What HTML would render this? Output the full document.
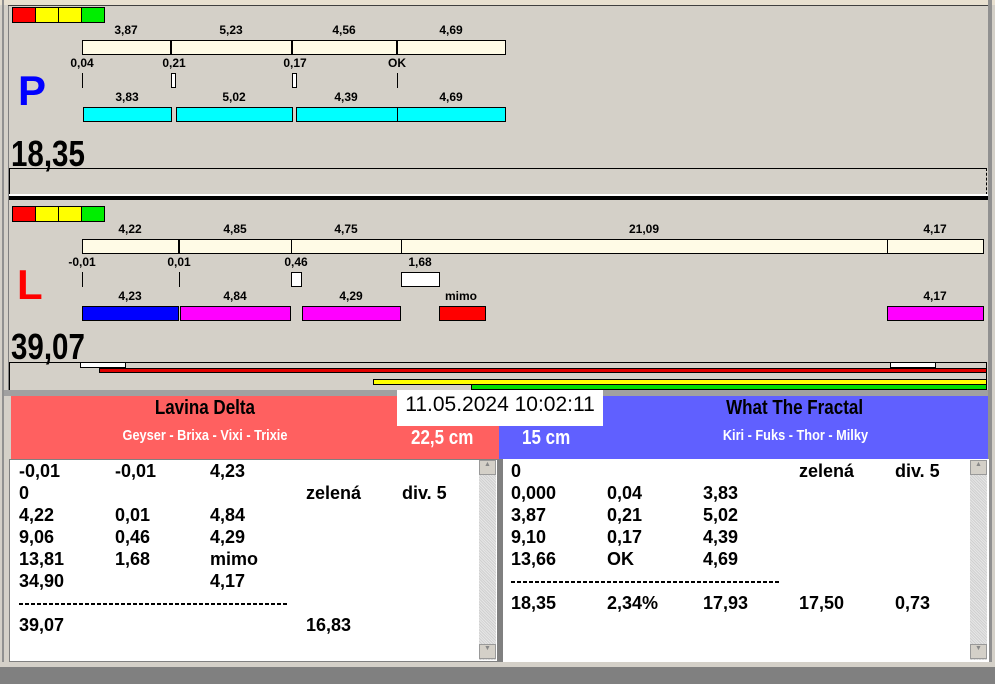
<!DOCTYPE html>
<html><head><meta charset="utf-8"><style>
*{margin:0;padding:0;box-sizing:border-box}
body{width:995px;height:684px;background:#d4d0c8;position:relative;overflow:hidden;font-family:"Liberation Sans",Arial,sans-serif;font-weight:bold;color:#000}
.a{position:absolute}
.t{position:absolute;font-size:12px;transform:translateX(-50%);white-space:nowrap;line-height:14px}
.b{position:absolute;border:1px solid #000}
.ln{position:absolute;font-size:18px;line-height:22px;white-space:nowrap}
.big{position:absolute;font-size:36px;line-height:36px;transform:scaleX(0.82);transform-origin:left top}
.dash{position:absolute;height:2px;background:repeating-linear-gradient(90deg,#000 0 4px,transparent 4px 6px)}
.nar{display:inline-block;transform:scaleX(0.85)}
</style></head><body>
<div class="a" style="left:0;top:0;width:995px;height:5px;background:#e8e0d0"></div>
<div class="a" style="left:2px;top:0;width:2px;height:668px;background:#909090"></div>
<div class="a" style="left:8px;top:5px;width:1px;height:385px;background:#808080"></div>
<div class="a" style="left:8px;top:5px;width:980px;height:1px;background:#404040"></div>
<div class="a" style="left:988px;top:0;width:4px;height:668px;background:#909090"></div>

<div class="b" style="left:12px;top:7px;width:24px;height:16px;background:#f00"></div>
<div class="b" style="left:35px;top:7px;width:24px;height:16px;background:#ff0"></div>
<div class="b" style="left:58px;top:7px;width:24px;height:16px;background:#ff0"></div>
<div class="b" style="left:81px;top:7px;width:24px;height:16px;background:#0e0"></div>
<div class="t" style="left:126px;top:23px">3,87</div>
<div class="t" style="left:231px;top:23px">5,23</div>
<div class="t" style="left:344px;top:23px">4,56</div>
<div class="t" style="left:451px;top:23px">4,69</div>
<div class="b" style="left:82px;top:40px;width:424px;height:15px;background:#fffbe6"></div>
<div class="a" style="left:170px;top:40px;width:2px;height:15px;background:#000"></div>
<div class="a" style="left:291px;top:40px;width:2px;height:15px;background:#000"></div>
<div class="a" style="left:396px;top:40px;width:2px;height:15px;background:#000"></div>
<div class="t" style="left:82px;top:56px">0,04</div>
<div class="t" style="left:174px;top:56px">0,21</div>
<div class="t" style="left:295px;top:56px">0,17</div>
<div class="t" style="left:397px;top:56px">OK</div>
<div class="a" style="left:82px;top:73px;width:1px;height:15px;background:#000"></div>
<div class="b" style="left:171px;top:73px;width:5px;height:15px;background:#fff"></div>
<div class="b" style="left:292px;top:73px;width:5px;height:15px;background:#fff"></div>
<div class="a" style="left:397px;top:73px;width:1px;height:15px;background:#000"></div>
<div class="a" style="left:18px;top:68px;font-size:42px;color:#0000ff;line-height:46px">P</div>
<div class="t" style="left:127px;top:90px">3,83</div>
<div class="t" style="left:234px;top:90px">5,02</div>
<div class="t" style="left:346px;top:90px">4,39</div>
<div class="t" style="left:451px;top:90px">4,69</div>
<div class="b" style="left:83px;top:107px;width:89px;height:15px;background:#0ff"></div>
<div class="b" style="left:176px;top:107px;width:117px;height:15px;background:#0ff"></div>
<div class="b" style="left:296px;top:107px;width:102px;height:15px;background:#0ff"></div>
<div class="b" style="left:397px;top:107px;width:109px;height:15px;background:#0ff"></div>
<div class="big" style="left:11px;top:136px">18,35</div>
<div class="b" style="left:9px;top:168px;width:978px;height:27px;border-bottom:none;border-right:1px dashed #000"></div>
<div class="a" style="left:9px;top:194px;width:979px;height:2px;background:#fff"></div>
<div class="a" style="left:9px;top:196px;width:979px;height:4px;background:#000"></div>

<div class="b" style="left:12px;top:206px;width:24px;height:16px;background:#f00"></div>
<div class="b" style="left:35px;top:206px;width:24px;height:16px;background:#ff0"></div>
<div class="b" style="left:58px;top:206px;width:24px;height:16px;background:#ff0"></div>
<div class="b" style="left:81px;top:206px;width:24px;height:16px;background:#0e0"></div>
<div class="t" style="left:130px;top:222px">4,22</div>
<div class="t" style="left:235px;top:222px">4,85</div>
<div class="t" style="left:346px;top:222px">4,75</div>
<div class="t" style="left:644px;top:222px">21,09</div>
<div class="t" style="left:935px;top:222px">4,17</div>
<div class="b" style="left:82px;top:239px;width:902px;height:15px;background:#fffbe6"></div>
<div class="a" style="left:178px;top:239px;width:2px;height:15px;background:#000"></div>
<div class="a" style="left:291px;top:239px;width:1px;height:15px;background:#000"></div>
<div class="a" style="left:401px;top:239px;width:1px;height:15px;background:#000"></div>
<div class="a" style="left:887px;top:239px;width:1px;height:15px;background:#000"></div>
<div class="t" style="left:82px;top:255px">-0,01</div>
<div class="t" style="left:179px;top:255px">0,01</div>
<div class="t" style="left:296px;top:255px">0,46</div>
<div class="t" style="left:420px;top:255px">1,68</div>
<div class="a" style="left:82px;top:272px;width:1px;height:15px;background:#000"></div>
<div class="a" style="left:179px;top:272px;width:1px;height:15px;background:#000"></div>
<div class="b" style="left:291px;top:272px;width:11px;height:15px;background:#fff"></div>
<div class="b" style="left:401px;top:272px;width:39px;height:15px;background:#fff"></div>
<div class="a" style="left:17px;top:262px;font-size:42px;color:#f00;line-height:46px">L</div>
<div class="t" style="left:130px;top:289px">4,23</div>
<div class="t" style="left:235px;top:289px">4,84</div>
<div class="t" style="left:351px;top:289px">4,29</div>
<div class="t" style="left:461px;top:289px">mimo</div>
<div class="t" style="left:935px;top:289px">4,17</div>
<div class="b" style="left:82px;top:306px;width:97px;height:15px;background:#00f"></div>
<div class="b" style="left:180px;top:306px;width:111px;height:15px;background:#f0f"></div>
<div class="b" style="left:302px;top:306px;width:99px;height:15px;background:#f0f"></div>
<div class="b" style="left:439px;top:306px;width:47px;height:15px;background:#f00"></div>
<div class="b" style="left:887px;top:306px;width:97px;height:15px;background:#f0f"></div>
<div class="big" style="left:11px;top:329px">39,07</div>
<div class="b" style="left:9px;top:362px;width:978px;height:28px;border-bottom:none"></div>
<div class="b" style="left:80px;top:362px;width:46px;height:6px;background:#fff"></div>
<div class="b" style="left:890px;top:362px;width:46px;height:6px;background:#fff"></div>
<div class="b" style="left:99px;top:368px;width:888px;height:5px;background:#e00000"></div>
<div class="b" style="left:373px;top:379px;width:614px;height:6px;background:#ff0"></div>
<div class="b" style="left:471px;top:384px;width:516px;height:6px;background:#0d0"></div>
<div class="a" style="left:4px;top:390px;width:984px;height:6px;background:#a0a0a0"></div>

<div class="a" style="left:11px;top:396px;width:488px;height:64px;background:#ff6060"></div>
<div class="a" style="left:499px;top:396px;width:489px;height:64px;background:#6060ff"></div>
<div class="a" style="left:11px;top:396px;width:388px;text-align:center;font-size:20px;line-height:24px"><span class="nar">Lavina Delta</span></div>
<div class="a" style="left:11px;top:427px;width:388px;text-align:center;font-size:15px;color:#fff"><span class="nar">Geyser - Brixa - Vixi - Trixie</span></div>
<div class="a" style="left:411px;top:427px;font-size:20px;color:#fff"><span class="nar" style="transform-origin:left">22,5 cm</span></div>
<div class="a" style="left:522px;top:427px;font-size:20px;color:#fff"><span class="nar" style="transform-origin:left">15 cm</span></div>
<div class="a" style="left:590px;top:396px;width:410px;text-align:center;font-size:20px;line-height:24px"><span class="nar">What The Fractal</span></div>
<div class="a" style="left:590px;top:427px;width:410px;text-align:center;font-size:15px;color:#fff"><span class="nar">Kiri - Fuks - Thor - Milky</span></div>
<div class="a" style="left:397px;top:390px;width:206px;height:36px;background:#fff;font-weight:normal;font-size:21px;text-align:center;line-height:30px;white-space:nowrap">11.05.2024 10:02:11</div>

<div class="a" style="left:9px;top:459px;width:490px;height:203px;background:#fff;border:1px solid #808080"></div>
<div class="a" style="left:497px;top:459px;width:6px;height:203px;background:#808080"></div>
<div class="a" style="left:503px;top:459px;width:486px;height:203px;background:#fff"></div>
<div class="a" style="left:479px;top:460px;width:17px;height:200px;background:repeating-linear-gradient(45deg,#e6e6e6 0 1px,#d0d0d0 1px 2px)"></div>
<div class="a" style="left:479px;top:460px;width:17px;height:15px;background:#d4d0c8;border:1px solid #999;font-size:7px;text-align:center;color:#888">▲</div>
<div class="a" style="left:479px;top:644px;width:17px;height:15px;background:#d4d0c8;border:1px solid #999;font-size:7px;text-align:center;color:#888">▼</div>
<div class="a" style="left:970px;top:460px;width:17px;height:200px;background:repeating-linear-gradient(45deg,#e6e6e6 0 1px,#d0d0d0 1px 2px)"></div>
<div class="a" style="left:970px;top:460px;width:17px;height:15px;background:#d4d0c8;border:1px solid #999;font-size:7px;text-align:center;color:#888">▲</div>
<div class="a" style="left:970px;top:644px;width:17px;height:15px;background:#d4d0c8;border:1px solid #999;font-size:7px;text-align:center;color:#888">▼</div>

<div class="ln" style="left:19px;top:460px">-0,01</div><div class="ln" style="left:115px;top:460px">-0,01</div><div class="ln" style="left:210px;top:460px">4,23</div>
<div class="ln" style="left:19px;top:482px">0</div><div class="ln" style="left:306px;top:482px">zelená</div><div class="ln" style="left:402px;top:482px">div. 5</div>
<div class="ln" style="left:19px;top:504px">4,22</div><div class="ln" style="left:115px;top:504px">0,01</div><div class="ln" style="left:210px;top:504px">4,84</div>
<div class="ln" style="left:19px;top:526px">9,06</div><div class="ln" style="left:115px;top:526px">0,46</div><div class="ln" style="left:210px;top:526px">4,29</div>
<div class="ln" style="left:19px;top:548px">13,81</div><div class="ln" style="left:115px;top:548px">1,68</div><div class="ln" style="left:210px;top:548px">mimo</div>
<div class="ln" style="left:19px;top:570px">34,90</div><div class="ln" style="left:210px;top:570px">4,17</div>
<div class="dash" style="left:19px;top:603px;width:270px"></div>
<div class="ln" style="left:19px;top:614px">39,07</div><div class="ln" style="left:306px;top:614px">16,83</div>

<div class="ln" style="left:511px;top:460px">0</div><div class="ln" style="left:799px;top:460px">zelená</div><div class="ln" style="left:895px;top:460px">div. 5</div>
<div class="ln" style="left:511px;top:482px">0,000</div><div class="ln" style="left:607px;top:482px">0,04</div><div class="ln" style="left:703px;top:482px">3,83</div>
<div class="ln" style="left:511px;top:504px">3,87</div><div class="ln" style="left:607px;top:504px">0,21</div><div class="ln" style="left:703px;top:504px">5,02</div>
<div class="ln" style="left:511px;top:526px">9,10</div><div class="ln" style="left:607px;top:526px">0,17</div><div class="ln" style="left:703px;top:526px">4,39</div>
<div class="ln" style="left:511px;top:548px">13,66</div><div class="ln" style="left:607px;top:548px">OK</div><div class="ln" style="left:703px;top:548px">4,69</div>
<div class="dash" style="left:511px;top:581px;width:270px"></div>
<div class="ln" style="left:511px;top:592px">18,35</div><div class="ln" style="left:607px;top:592px">2,34%</div><div class="ln" style="left:703px;top:592px">17,93</div><div class="ln" style="left:799px;top:592px">17,50</div><div class="ln" style="left:895px;top:592px">0,73</div>

<div class="a" style="left:0;top:662px;width:995px;height:6px;background:#d4d0c8"></div>
<div class="a" style="left:0;top:667px;width:995px;height:17px;background:#808080"></div>
</body></html>
